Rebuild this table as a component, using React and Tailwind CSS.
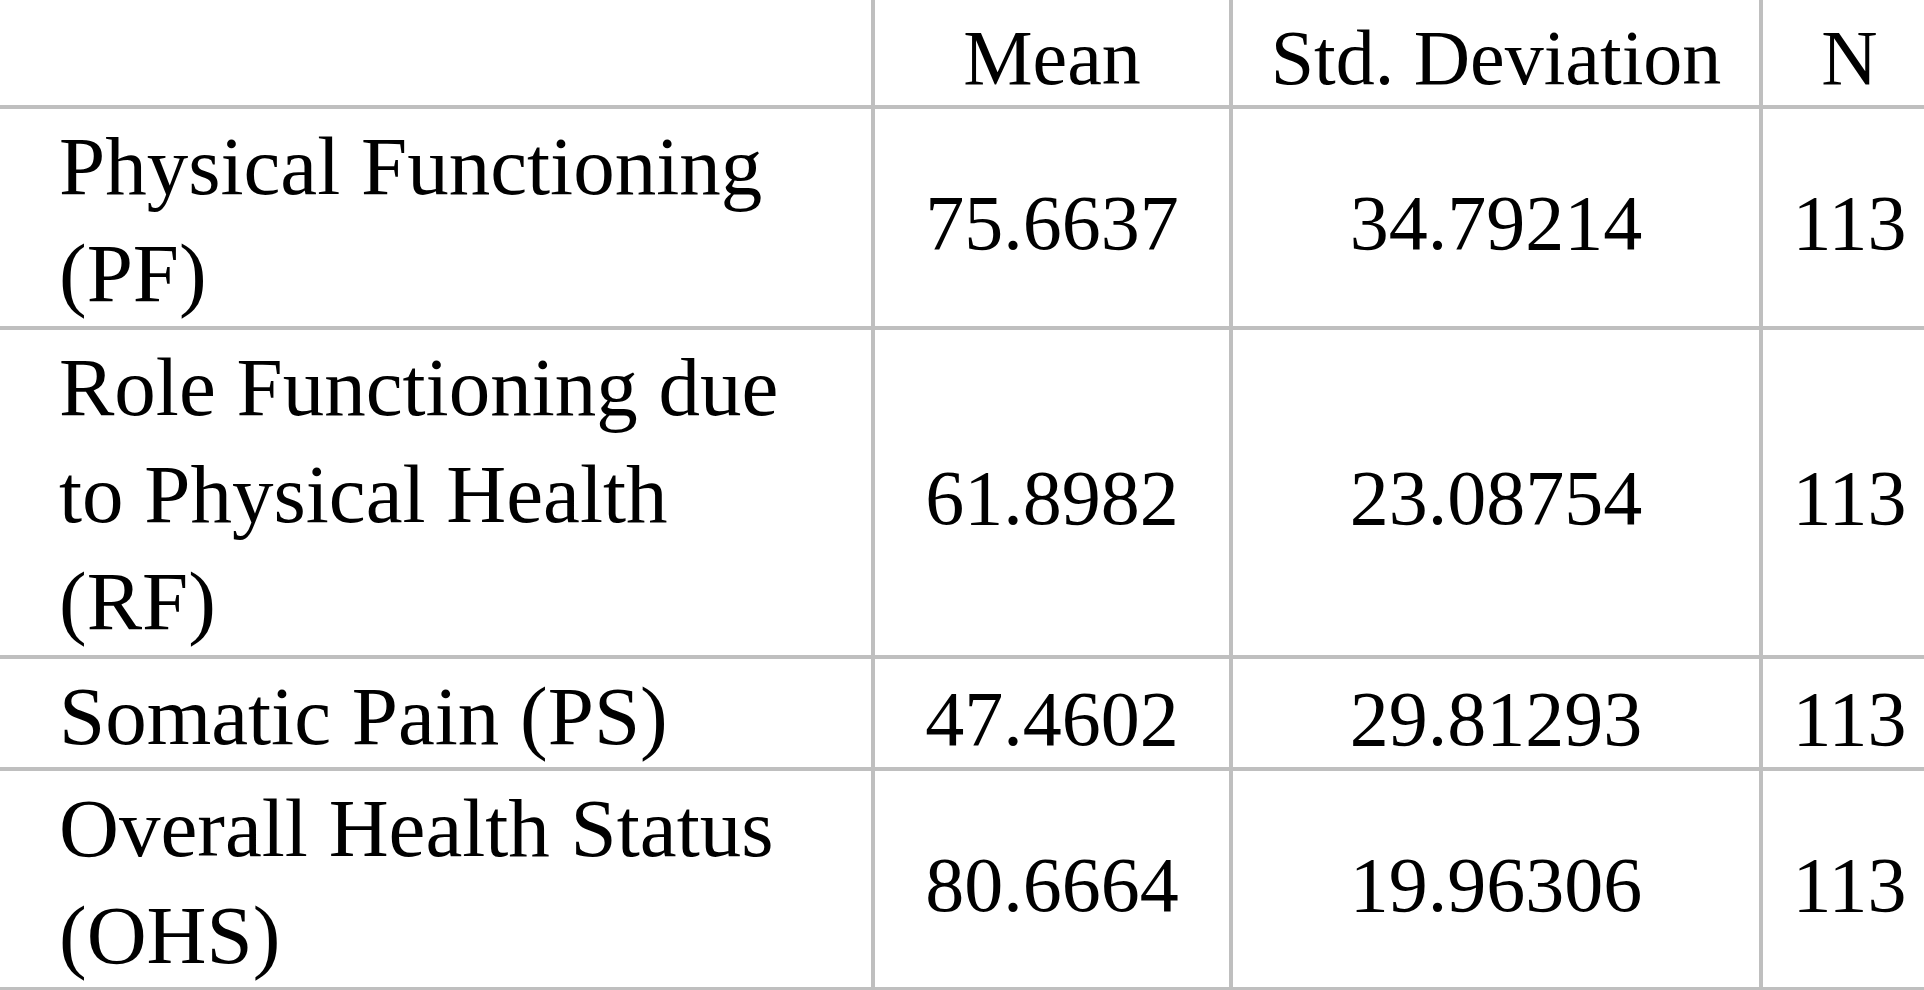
import React from "react";

const rows = [
  { label: "Physical Functioning (PF)", mean: "75.6637", sd: "34.79214", n: "113" },
  { label: "Role Functioning due to Physical Health (RF)", mean: "61.8982", sd: "23.08754", n: "113" },
  { label: "Somatic Pain (PS)", mean: "47.4602", sd: "29.81293", n: "113" },
  { label: "Overall Health Status (OHS)", mean: "80.6664", sd: "19.96306", n: "113" },
];

const serif = { fontFamily: '"Liberation Serif", "Times New Roman", serif' };

function NumCell({ children }) {
  return (
    <div className="bg-white flex items-center justify-center pt-[10px] text-[78px] leading-[107px] text-black whitespace-nowrap">
      {children}
    </div>
  );
}

export default function App() {
  return (
    <div className="w-[1924px] h-[990px] overflow-hidden bg-white" style={serif}>
      <div className="grid w-[1936px] grid-cols-[871px_354px_526px_173px] grid-rows-[105px_217px_325px_108px_216px] gap-[4px] bg-[#bfbfbf] pb-[4px]">
        <div className="bg-white" />
        <div className="bg-white flex items-center justify-center pt-[9px] text-[78px] leading-[107px] text-black">Mean</div>
        <div className="bg-white flex items-center justify-center pt-[9px] text-[78px] leading-[107px] text-black whitespace-nowrap">Std. Deviation</div>
        <div className="bg-white flex items-center justify-center pt-[9px] text-[78px] leading-[107px] text-black">N</div>
        {rows.map((r) => (
          <React.Fragment key={r.label}>
            <div className="bg-white pl-[59px] pt-[4px] text-[83px] leading-[107px] text-black">
              <div className="w-[760px]">{r.label}</div>
            </div>
            <NumCell>{r.mean}</NumCell>
            <NumCell>{r.sd}</NumCell>
            <NumCell>{r.n}</NumCell>
          </React.Fragment>
        ))}
      </div>
    </div>
  );
}
